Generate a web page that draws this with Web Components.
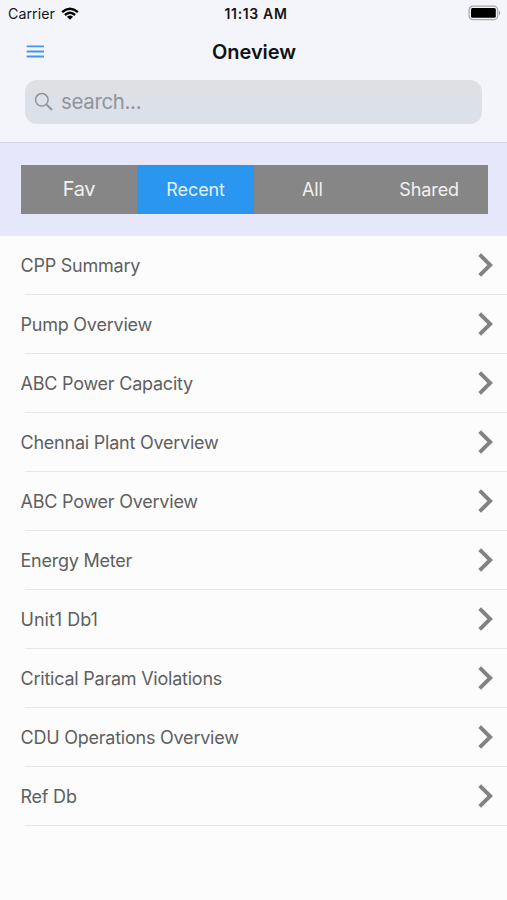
<!DOCTYPE html>
<html lang="en">
<head>
<meta charset="utf-8">
<title>Oneview</title>
<style>
html, body { margin: 0; height: 100%; background: #fcfcfc; }
body { font-family: Inter, "Liberation Sans", sans-serif; overflow: hidden; }
</style>
</head>
<body>
<one-view></one-view>
<script>
const define = (name, html) => customElements.define(name, class extends HTMLElement {
  constructor() {
    super();
    this.attachShadow({ mode: 'open' }).innerHTML = html;
  }
});

define('status-bar', `
<style>
:host { display: grid; grid-template-columns: 1fr auto 1fr; align-items: center; height: 28px; padding: 0 6px 0 8px; color: #141416; line-height: 20px; box-sizing: border-box; }
.left { display: flex; align-items: center; gap: 6.5px; font-size: 14.2px; letter-spacing: 0.05px; }
.time { font-size: 14px; font-weight: 600; letter-spacing: 0.65px; padding-left: 3px; }
svg { display: block; }
.left svg { margin-top: -1px; }
.battery { justify-self: end; margin-top: -2px; }
</style>
<div class="left"><span>Carrier</span>
<svg width="18" height="14" viewBox="0 0 18 14" fill="none" stroke="#000" stroke-width="2.4"><path d="M1.1 5.1Q9 -1.7 16.9 5.1"/><path d="M3.9 8Q9 3.6 14.1 8"/><path d="M9 12.8L5.9 9.7Q9 7.3 12.1 9.7Z" fill="#000" stroke="none"/></svg></div>
<span class="time">11:13 AM</span>
<svg class="battery" width="33" height="16" viewBox="0 0 33 16"><rect x="1.1" y="1.1" width="28.6" height="13.6" rx="4" fill="#f4f5f9" stroke="#a9a9ab" stroke-width="1.3"/><rect x="3" y="3.1" width="24.8" height="9.7" rx="1.5" fill="#000"/><path d="M31 5.7Q33.6 7.9 31 10.2Z" fill="#a0a0a2"/></svg>
`);

define('title-bar', `
<style>
:host { display: grid; grid-template-columns: 1fr auto 1fr; align-items: center; height: 48px; padding: 0 26px; color: #111114; }
svg { display: block; }
h1 { margin: 0; padding-left: 1px; font-size: 20px; line-height: 28px; font-weight: 600; letter-spacing: -0.05px; }
</style>
<svg width="19" height="14" viewBox="0 0 19 14" stroke="#4595ee" stroke-width="1.8"><path d="M.7 1.4H18M.7 6.5H18M.7 11.5H18"/></svg>
<h1><slot></slot></h1><span></span>
`);

define('search-field', `
<style>
:host { display: flex; align-items: center; gap: 7px; height: 44px; margin: 4.4px 25px 0; padding: 0 9px; border-radius: 12px; background: linear-gradient(#dfe0e4 0 30%, #dce0e9 40%); box-sizing: border-box; color: #929399; font-size: 20.4px; letter-spacing: -0.3px; line-height: 28px; }
svg { display: block; flex: none; }
</style>
<svg width="20" height="20" viewBox="0 0 20 20" fill="none" stroke="#929399" stroke-width="1.5"><circle cx="7.8" cy="7.8" r="6.3"/><path d="M12.4 12.4L18 18" stroke-width="1.9"/></svg>
<span><slot></slot></span>
`);

define('segment-item', `
<style>
:host { display: flex; flex: 1; align-items: center; justify-content: center; color: #f1f1f1; font-size: 18px; letter-spacing: -0.1px; }
:host([large]) { font-size: 20px; letter-spacing: -0.4px; }
:host([selected]) { background: #2a96ef; color: #e2f1ff; }
</style><slot></slot>
`);

define('segment-bar', `
<style>
:host { display: flex; height: 94px; padding: 22px 19.5px 22px 20.5px; border-top: 1px solid #d6d6e6; background: #e7e7fc; box-sizing: border-box; }
div { display: flex; flex: 1; background: #868686; }
</style><div><slot></slot></div>
`);

define('list-row', `
<style>
:host { display: flex; height: 59.05px; box-sizing: border-box; flex-direction: column; color: #5f5f5f; }
.content { flex: 1; display: flex; align-items: center; justify-content: space-between; padding: 0 13.5px 0 20.5px; font-size: 18px; letter-spacing: -0.23px; line-height: 26px; white-space: nowrap; }
:host([wide]) .content { letter-spacing: 0; }
span { padding-top: 2px; }
hr { width: calc(100% - 25px); height: 1px; margin: 0 0 0 25px; border: 0; background: #e7e7e8; }
svg { display: block; }
</style>
<div class="content"><span><slot></slot></span>
<svg width="17" height="26" viewBox="0 0 17 26" fill="none" stroke="#828282" stroke-width="3.9"><path d="M2.7 2.6L13.2 13L2.7 23.4"/></svg></div><hr>
`);

define('one-view', `
<style>
:host { display: flex; flex-direction: column; height: 900px; background: #fcfcfc; }
header { height: 141.7px; background: #f4f5fa; flex: none; }
segment-bar { flex: none; }
</style>
<header>
  <status-bar></status-bar>
  <title-bar>Oneview</title-bar>
  <search-field>search...</search-field>
</header>
<segment-bar>
  <segment-item large>Fav</segment-item>
  <segment-item selected>Recent</segment-item>
  <segment-item>All</segment-item>
  <segment-item>Shared</segment-item>
</segment-bar>
<main>
  <list-row>CPP Summary</list-row>
  <list-row>Pump Overview</list-row>
  <list-row>ABC Power Capacity</list-row>
  <list-row>Chennai Plant Overview</list-row>
  <list-row>ABC Power Overview</list-row>
  <list-row>Energy Meter</list-row>
  <list-row wide>Unit1 Db1</list-row>
  <list-row>Critical Param Violations</list-row>
  <list-row>CDU Operations Overview</list-row>
  <list-row>Ref Db</list-row>
</main>
`);
</script>
</body>
</html>
